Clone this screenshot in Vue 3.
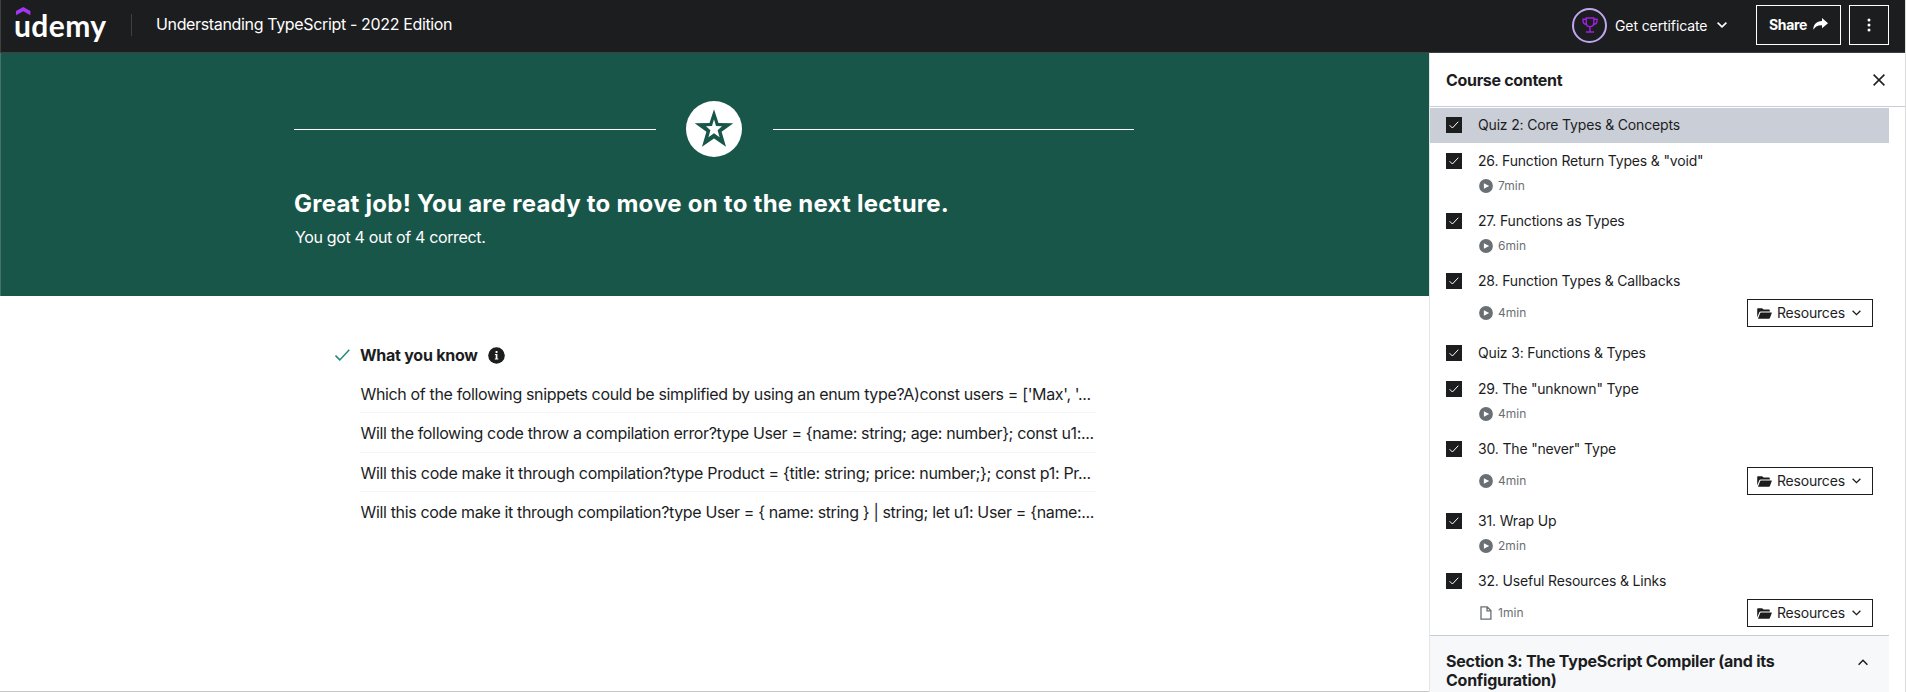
<script setup>
const lectures = [
  { title: 'Quiz 2: Core Types & Concepts', active: true },
  { title: '26. Function Return Types & "void"', time: '7min' },
  { title: '27. Functions as Types', time: '6min' },
  { title: '28. Function Types & Callbacks', time: '4min', resources: true },
  { title: 'Quiz 3: Functions & Types' },
  { title: '29. The "unknown" Type', time: '4min' },
  { title: '30. The "never" Type', time: '4min', resources: true },
  { title: '31. Wrap Up', time: '2min' },
  { title: '32. Useful Resources & Links', time: '1min', resources: true, article: true },
]
const questions = [
  "Which of the following snippets could be simplified by using an enum type?A)const users = ['Max', '...",
  'Will the following code throw a compilation error?type User = {name: string; age: number}; const u1:...',
  'Will this code make it through compilation?type Product = {title: string; price: number;}; const p1: Pr...',
  'Will this code make it through compilation?type User = { name: string } | string; let u1: User = {name:...',
]
</script>

<template>
  <div class="page">
    <header class="topbar">
      <a class="logo">
        <svg class="hat" width="15" height="9" viewBox="0 0 15 9"><path d="M7.3 0 14.4 4.1V8.2L7.3 4.2 0 8.2V4.1z" fill="#a435f0" /></svg>
        <span class="wordmark">udemy</span>
      </a>
      <span class="divider"></span>
      <span class="course">Understanding TypeScript - 2022 Edition</span>
      <div class="certificate">
        <span class="ring">
          <svg width="16" height="16" viewBox="0 0 16 16" fill="none" stroke="#a021e0" stroke-width="1.4">
            <path d="M4.2 1h7.6v4.6c0 2.5-1.5 4.2-3.8 4.2S4.2 8.100 4.200 5.600zM4.200 2.300H1v1.500c0 2.200 1.300 3.600 3.800 3.900M11.800 2.300H15v1.500c0 2.200-1.300 3.600-3.800 3.900M8 9.800V14.800M3.900 15h8.200" />
          </svg>
        </span>
        <span class="cert-label">Get certificate</span>
        <svg width="10" height="6" viewBox="0 0 10 6" fill="none" stroke="#fff" stroke-width="1.6"><path d="M.6.6 5 4.900 9.400.6" /></svg>
      </div>
      <button class="share">
        <span>Share</span>
        <svg width="15" height="12" viewBox="0 0 15 12" fill="#fff"><path d="M9 0l6 5.200-6 5V7.300C5 7.200 2.300 8.300.3 11.800.2 6.500 3.600 3.400 9 3z" /></svg>
      </button>
      <button class="more"><svg width="4" height="14" viewBox="0 0 4 14" fill="#fff"><circle cx="2" cy="2" r="1.500" /><circle cx="2" cy="7" r="1.500" /><circle cx="2" cy="12" r="1.500" /></svg></button>
    </header>

    <div class="body">
      <main class="main">
        <section class="banner">
          <div class="star-row">
            <span class="rule"></span>
            <span class="star">
              <svg width="56" height="56" viewBox="0 0 56 56" fill="#19564a" fill-rule="evenodd"><path d="M28 8.300 32.500 21.900 47.300 22.300 35.600 30.800 40 45.700 28 37.600 16 45.700 20.400 30.800 8.700 22.300 23.500 21.900zM28 18.200 30 25 36 25.200 31.600 29.200 33.600 36.200 28 32.300 22.400 36.200 24.400 29.200 20 25.200 26 25z" /></svg>
            </span>
            <span class="rule"></span>
          </div>
          <h1>Great job! You are ready to move on to the next lecture.</h1>
          <p>You got 4 out of 4 correct.</p>
        </section>
        <section class="known">
          <div class="known-head">
            <svg width="15" height="12" viewBox="0 0 15 12" fill="none" stroke="#1e8a7a" stroke-width="1.500"><path d="M.5 6.600 4.800 10.900 14.300.7" /></svg>
            <h2>What you know</h2>
            <svg class="info" width="17" height="17" viewBox="0 0 17 17"><circle cx="8.500" cy="8.500" r="8.300" fill="#1c1d1f" /><path d="M7.600 4h1.900v1.900H7.600zM6.900 7.100h2.500v4.500h.9v1H6.800v-1h.9V8.100h-.8z" fill="#fff" /></svg>
          </div>
          <ul class="questions">
            <li v-for="q in questions" :key="q">{{ q }}</li>
          </ul>
        </section>
      </main>

      <aside class="sidebar">
        <div class="side-head">
          <h2>Course content</h2>
          <svg width="12" height="12" viewBox="0 0 12 12" stroke="#1c1d1f" stroke-width="1.500"><path d="M.6.6l10.800 10.800M11.400.6L.6 11.400" /></svg>
        </div>
        <div class="list">
          <div v-for="(l, i) in lectures" :key="l.title" class="lecture" :class="{ active: l.active, timed: l.time, tall: l.resources, last: i === lectures.length - 1 }">
            <span class="box"><svg width="10" height="8" viewBox="0 0 10 8" fill="none" stroke="#fff" stroke-width="1"><path d="M.6 4.200 3.400 7 9.300.7" /></svg></span>
            <div class="info-col">
              <div class="title">{{ l.title }}</div>
              <div v-if="l.time" class="meta">
                <svg v-if="!l.article" width="14" height="14" viewBox="0 0 14 14"><circle cx="7" cy="7" r="6.900" fill="#6a6f73" /><path d="M4.900 4.300v5.400L10.200 7z" fill="#fff" /></svg>
                <svg v-else width="14" height="14" viewBox="0 0 14 14" fill="none" stroke="#6a6f73" stroke-width="1.300"><path d="M2 .8h6.200l3.700 3.700v8.700H2zM8 .8v4h4" /></svg>
                <span class="time">{{ l.time }}</span>
                <button v-if="l.resources" class="resources">
                  <svg width="15" height="11" viewBox="0 0 15 11" fill="#1c1d1f"><path d="M.2 9.500V1.200C.2.600.6.200 1.200.2h3.900l1.500 1.400h5.200c.6 0 1 .4 1 1v.9H3.700c-.7 0-1.200.3-1.500.9zM1 10.800 3.200 5c.1-.4.400-.6.800-.6h10.500c.3 0 .4.2.3.500l-1.900 5.200c-.2.400-.5.700-.9.700z" /></svg>
                  <span>Resources</span>
                  <svg width="9" height="6" viewBox="0 0 9 6" fill="none" stroke="#1c1d1f" stroke-width="1.300"><path d="M.6.700 4.500 4.600 8.400.7" /></svg>
                </button>
              </div>
            </div>
          </div>
          <div class="section">
            <h3>Section 3: The TypeScript Compiler (and its<br />Configuration)</h3>
            <svg width="10" height="7" viewBox="0 0 10 7" fill="none" stroke="#1c1d1f" stroke-width="1.500"><path d="M.6 5.800 5 1.300 9.400 5.800" /></svg>
          </div>
        </div>
      </aside>
    </div>
  </div>
</template>

<style>
body { margin: 0; background: #fff; }
</style>

<style scoped>
* { box-sizing: border-box; }
h1, h2, h3, p, ul { margin: 0; padding: 0; }
button { background: none; padding: 0; font: inherit; border-radius: 0; }
svg { display: block; flex: none; }
.page { width: 1906px; height: 692px; overflow: hidden; display: flex; flex-direction: column; font-family: Inter, "Liberation Sans", sans-serif; color: #1c1d1f; border-right: 1px solid #dcdcdc; white-space: nowrap; }
.topbar { height: 53px; flex: none; display: flex; align-items: center; background: #1c1d1f; color: #fff; border-bottom: 1px solid #3e4143; border-left: 1px solid #3e4143; padding: 0 16px 2px 15px; }
.logo { position: relative; width: 92px; height: 48px; }
.hat { position: absolute; left: 0; top: 6px; }
.wordmark { position: absolute; left: -2px; top: 6px; font: 700 30px/36px Lato, sans-serif; letter-spacing: 0.4px; }
.divider { width: 1px; height: 22px; background: #3e4143; margin: 0 24px 0 23px; }
.course { font-size: 16px; line-height: 24px; letter-spacing: -0.35px; padding-bottom: 2px; }
.certificate { margin-left: auto; display: flex; align-items: center; width: 156px; }
.ring { width: 35px; height: 35px; border: 2px solid #c0a6f0; border-radius: 50%; display: grid; place-items: center; margin-right: 8px; }
.cert-label { font-size: 14px; width: 94px; margin-right: 8px; letter-spacing: -0.1px; }
.share { margin-left: 28px; width: 85px; height: 40px; border: 1px solid #fff; color: #fff; display: flex; align-items: center; justify-content: center; gap: 6px; padding-bottom: 2px; font-size: 14px; font-weight: 700; letter-spacing: -0.3px; }
.more { margin-left: 8px; width: 40px; height: 40px; border: 1px solid #fff; display: grid; place-items: center; }
.body { flex: 1; display: flex; min-height: 0; }
.main { width: 1429px; border-bottom: 1px solid #c8c8c8; }
.banner { height: 243px; background: #19564a; color: #fff; padding: 48px 294px 0; border-left: 1px solid #44756b; }
.star-row { display: flex; align-items: center; width: 840px; margin-left: -1px; }
.rule { flex: 1; height: 1px; background: #fff; }
.star { width: 56px; height: 56px; border-radius: 50%; background: #fff; margin: 0 31px 0 30px; }
h1 { margin-top: 32px; font-size: 24px; line-height: 30px; font-weight: 700; letter-spacing: 0.24px; margin-left: -1px; }
.banner p { margin-top: 7px; font-size: 16px; line-height: 22px; letter-spacing: -0.35px; }
.known { padding: 48px 0 0 335px; }
.known-head { display: flex; align-items: center; height: 22px; }
.known-head h2 { font-size: 16px; width: 117px; margin: 0 11px 0 10px; letter-spacing: -0.25px; }
.questions { list-style: none; width: 736px; margin: 8px 0 0 25px; }
.questions li { height: 39.400px; line-height: 40px; padding-left: 0.500px; font-size: 16px; letter-spacing: -0.35px; border-bottom: 1px solid #f5f6f7; }
.questions li:nth-child(3) { letter-spacing: -0.31px; }
.questions li:last-child { border: 0; }
.sidebar { flex: 1; border-left: 1px solid #e4e6e8; }
.side-head { height: 54px; display: flex; align-items: center; justify-content: space-between; padding: 0 20px 0 16px; border-bottom: 1px solid #c9ccd5; }
.side-head h2 { font-size: 16px; letter-spacing: -0.32px; }
.list { width: 459px; padding-top: 1px; }
.lecture { height: 36px; display: flex; padding: 9px 16px 0; gap: 16px; }
.active { background: #caced7; height: 35px; margin-bottom: 1px; }
.timed { height: 60px; }
.tall { height: 72px; }
.last { height: 71px; }
.box { width: 16px; height: 16px; background: #1c1d1f; display: grid; place-items: center; }
.info-col { flex: 1; }
.title { font-size: 14px; line-height: 16px; letter-spacing: -0.17px; }
.meta { display: flex; align-items: center; height: 14px; margin: 10px 0 0 1px; color: #6a6f73; }
.tall .meta { height: 28px; }
.time { font-size: 12px; margin-left: 5px; padding-bottom: 1px; letter-spacing: 0.05px; }
.resources { margin-left: auto; width: 126px; height: 28px; border: 1px solid #1c1d1f; display: flex; align-items: center; padding-left: 9px; font-size: 14px; color: #1c1d1f; letter-spacing: -0.2px; }
.resources span { width: 67px; margin: 0 8px 0 5px; padding-bottom: 1px; text-align: left; }
.section { border-top: 1px solid #c9ccd5; background: #f7f8fa; height: 70px; padding: 16px 21px 0 16px; display: flex; justify-content: space-between; }
h3 { font-size: 16px; line-height: 19px; letter-spacing: -0.25px; }
.section svg { margin-top: 7px; }
</style>
